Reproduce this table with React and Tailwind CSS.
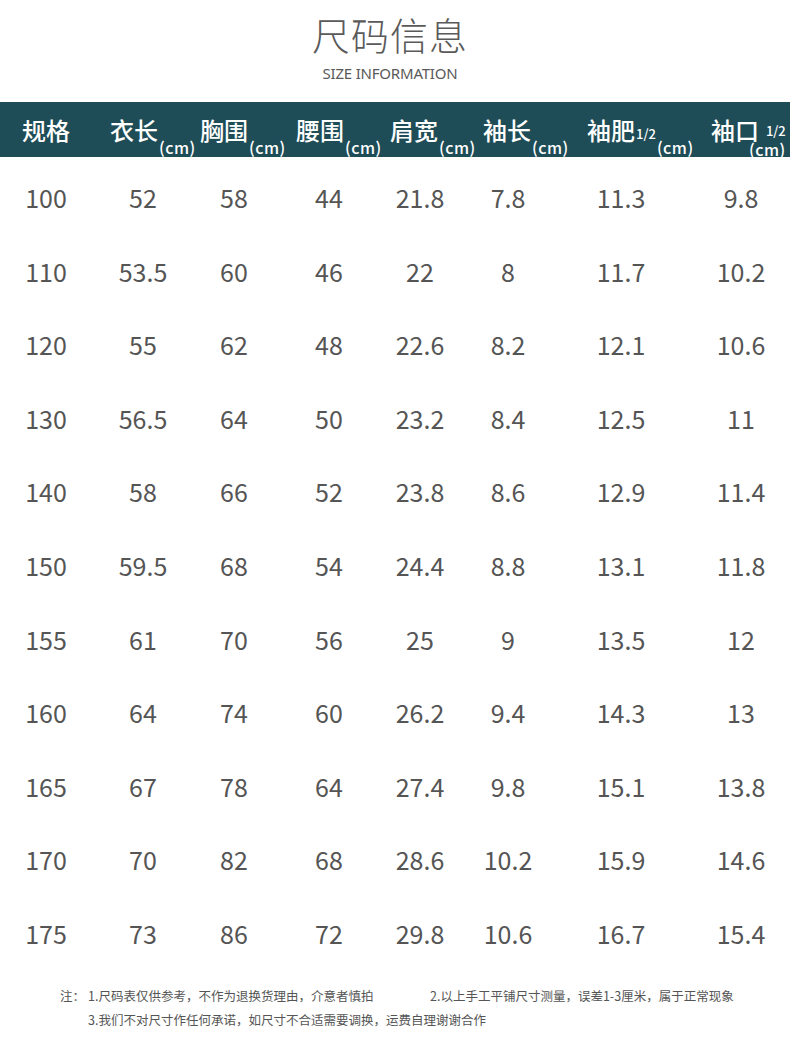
import React from 'react';

const rows = [
  ['100', '52', '58', '44', '21.8', '7.8', '11.3', '9.8'],
  ['110', '53.5', '60', '46', '22', '8', '11.7', '10.2'],
  ['120', '55', '62', '48', '22.6', '8.2', '12.1', '10.6'],
  ['130', '56.5', '64', '50', '23.2', '8.4', '12.5', '11'],
  ['140', '58', '66', '52', '23.8', '8.6', '12.9', '11.4'],
  ['150', '59.5', '68', '54', '24.4', '8.8', '13.1', '11.8'],
  ['155', '61', '70', '56', '25', '9', '13.5', '12'],
  ['160', '64', '74', '60', '26.2', '9.4', '14.3', '13'],
  ['165', '67', '78', '64', '27.4', '9.8', '15.1', '13.8'],
  ['170', '70', '82', '68', '28.6', '10.2', '15.9', '14.6'],
  ['175', '73', '86', '72', '29.8', '10.6', '16.7', '15.4'],
];

// 各列宽度，让数字居中落在参考图的位置
const colWidths = ['w-[92px]', 'w-[102px]', 'w-[80px]', 'w-[110px]', 'w-[72px]', 'w-[104px]', 'w-[122px]', 'w-[108px] pl-[10px]'];

function Cm() {
  return <span className="text-[16px] leading-none tracking-[0.5px] self-end pb-[2px] ml-[1px]">(cm)</span>;
}

export default function App() {
  return (
    <div
      className="w-[790px] h-[1053px] bg-white text-[#555555] flex flex-col"
      style={{ fontFamily: '"Noto Sans", "Noto Sans CJK SC", sans-serif' }}
    >
      {/* 标题 */}
      <div className="flex flex-col items-center pt-[15px] pr-[10px]">
        <h1 className="text-[38px] leading-none font-light tracking-[1px] text-[#5a5a5a]" style={{ fontFamily: '"Noto Sans CJK SC", sans-serif' }}>
          尺码信息
        </h1>
        <p className="mt-[13px] text-[15px] leading-none tracking-[-0.2px] text-[#5a5a5a]">SIZE INFORMATION</p>
      </div>

      {/* 表头 */}
      <div className="mt-[21px] h-[55px] bg-[#1f4d57] text-white flex leading-none" style={{ fontFamily: '"Noto Sans CJK SC", sans-serif' }}>
        <div className="w-[110px] pl-[22px] flex items-center text-[24px] font-medium">规格</div>
        <div className="w-[90px] flex items-center text-[24px] font-medium">衣长<Cm /></div>
        <div className="w-[96px] flex items-center text-[24px] font-medium">胸围<Cm /></div>
        <div className="w-[94px] flex items-center text-[24px] font-medium">腰围<Cm /></div>
        <div className="w-[93px] flex items-center text-[24px] font-medium">肩宽<Cm /></div>
        <div className="w-[104px] flex items-center text-[24px] font-medium">袖长<Cm /></div>
        <div className="w-[124px] flex items-center text-[24px] font-medium">
          袖肥
          <span className="text-[13px] leading-none mt-[8px] ml-[1px]">1/2</span>
          <Cm />
        </div>
        <div className="flex-1 flex items-center text-[24px] font-medium">
          袖口
          <div className="self-end flex flex-col items-end -ml-[10px]">
            <span className="text-[13px] leading-none">1/2</span>
            <span className="text-[16px] leading-none tracking-[0.5px] mt-[4px]">(cm)</span>
          </div>
        </div>
      </div>

      {/* 数据 */}
      <div className="mt-[4px] flex flex-col">
        {rows.map((row) => (
          <div key={row[0]} className="h-[73.6px] flex items-center text-[25px]" style={{ fontFamily: '"Noto Sans CJK SC", sans-serif' }}>
            {row.map((v, i) => (
              <div key={i} className={`${colWidths[i]} text-center`}>{v}</div>
            ))}
          </div>
        ))}
      </div>

      {/* 备注 */}
      <div className="mt-[19px] text-[12.5px] leading-none text-[#555555]" style={{ fontFamily: '"Noto Sans CJK SC", sans-serif' }}>
        <div className="flex pl-[60px]">
          <span className="w-[28px]">注：</span>
          <span className="w-[342px]">1.尺码表仅供参考，不作为退换货理由，介意者慎拍</span>
          <span>2.以上手工平铺尺寸测量，误差1-3厘米，属于正常现象</span>
        </div>
        <div className="pl-[88px] mt-[12px]">3.我们不对尺寸作任何承诺，如尺寸不合适需要调换，运费自理谢谢合作</div>
      </div>
    </div>
  );
}
